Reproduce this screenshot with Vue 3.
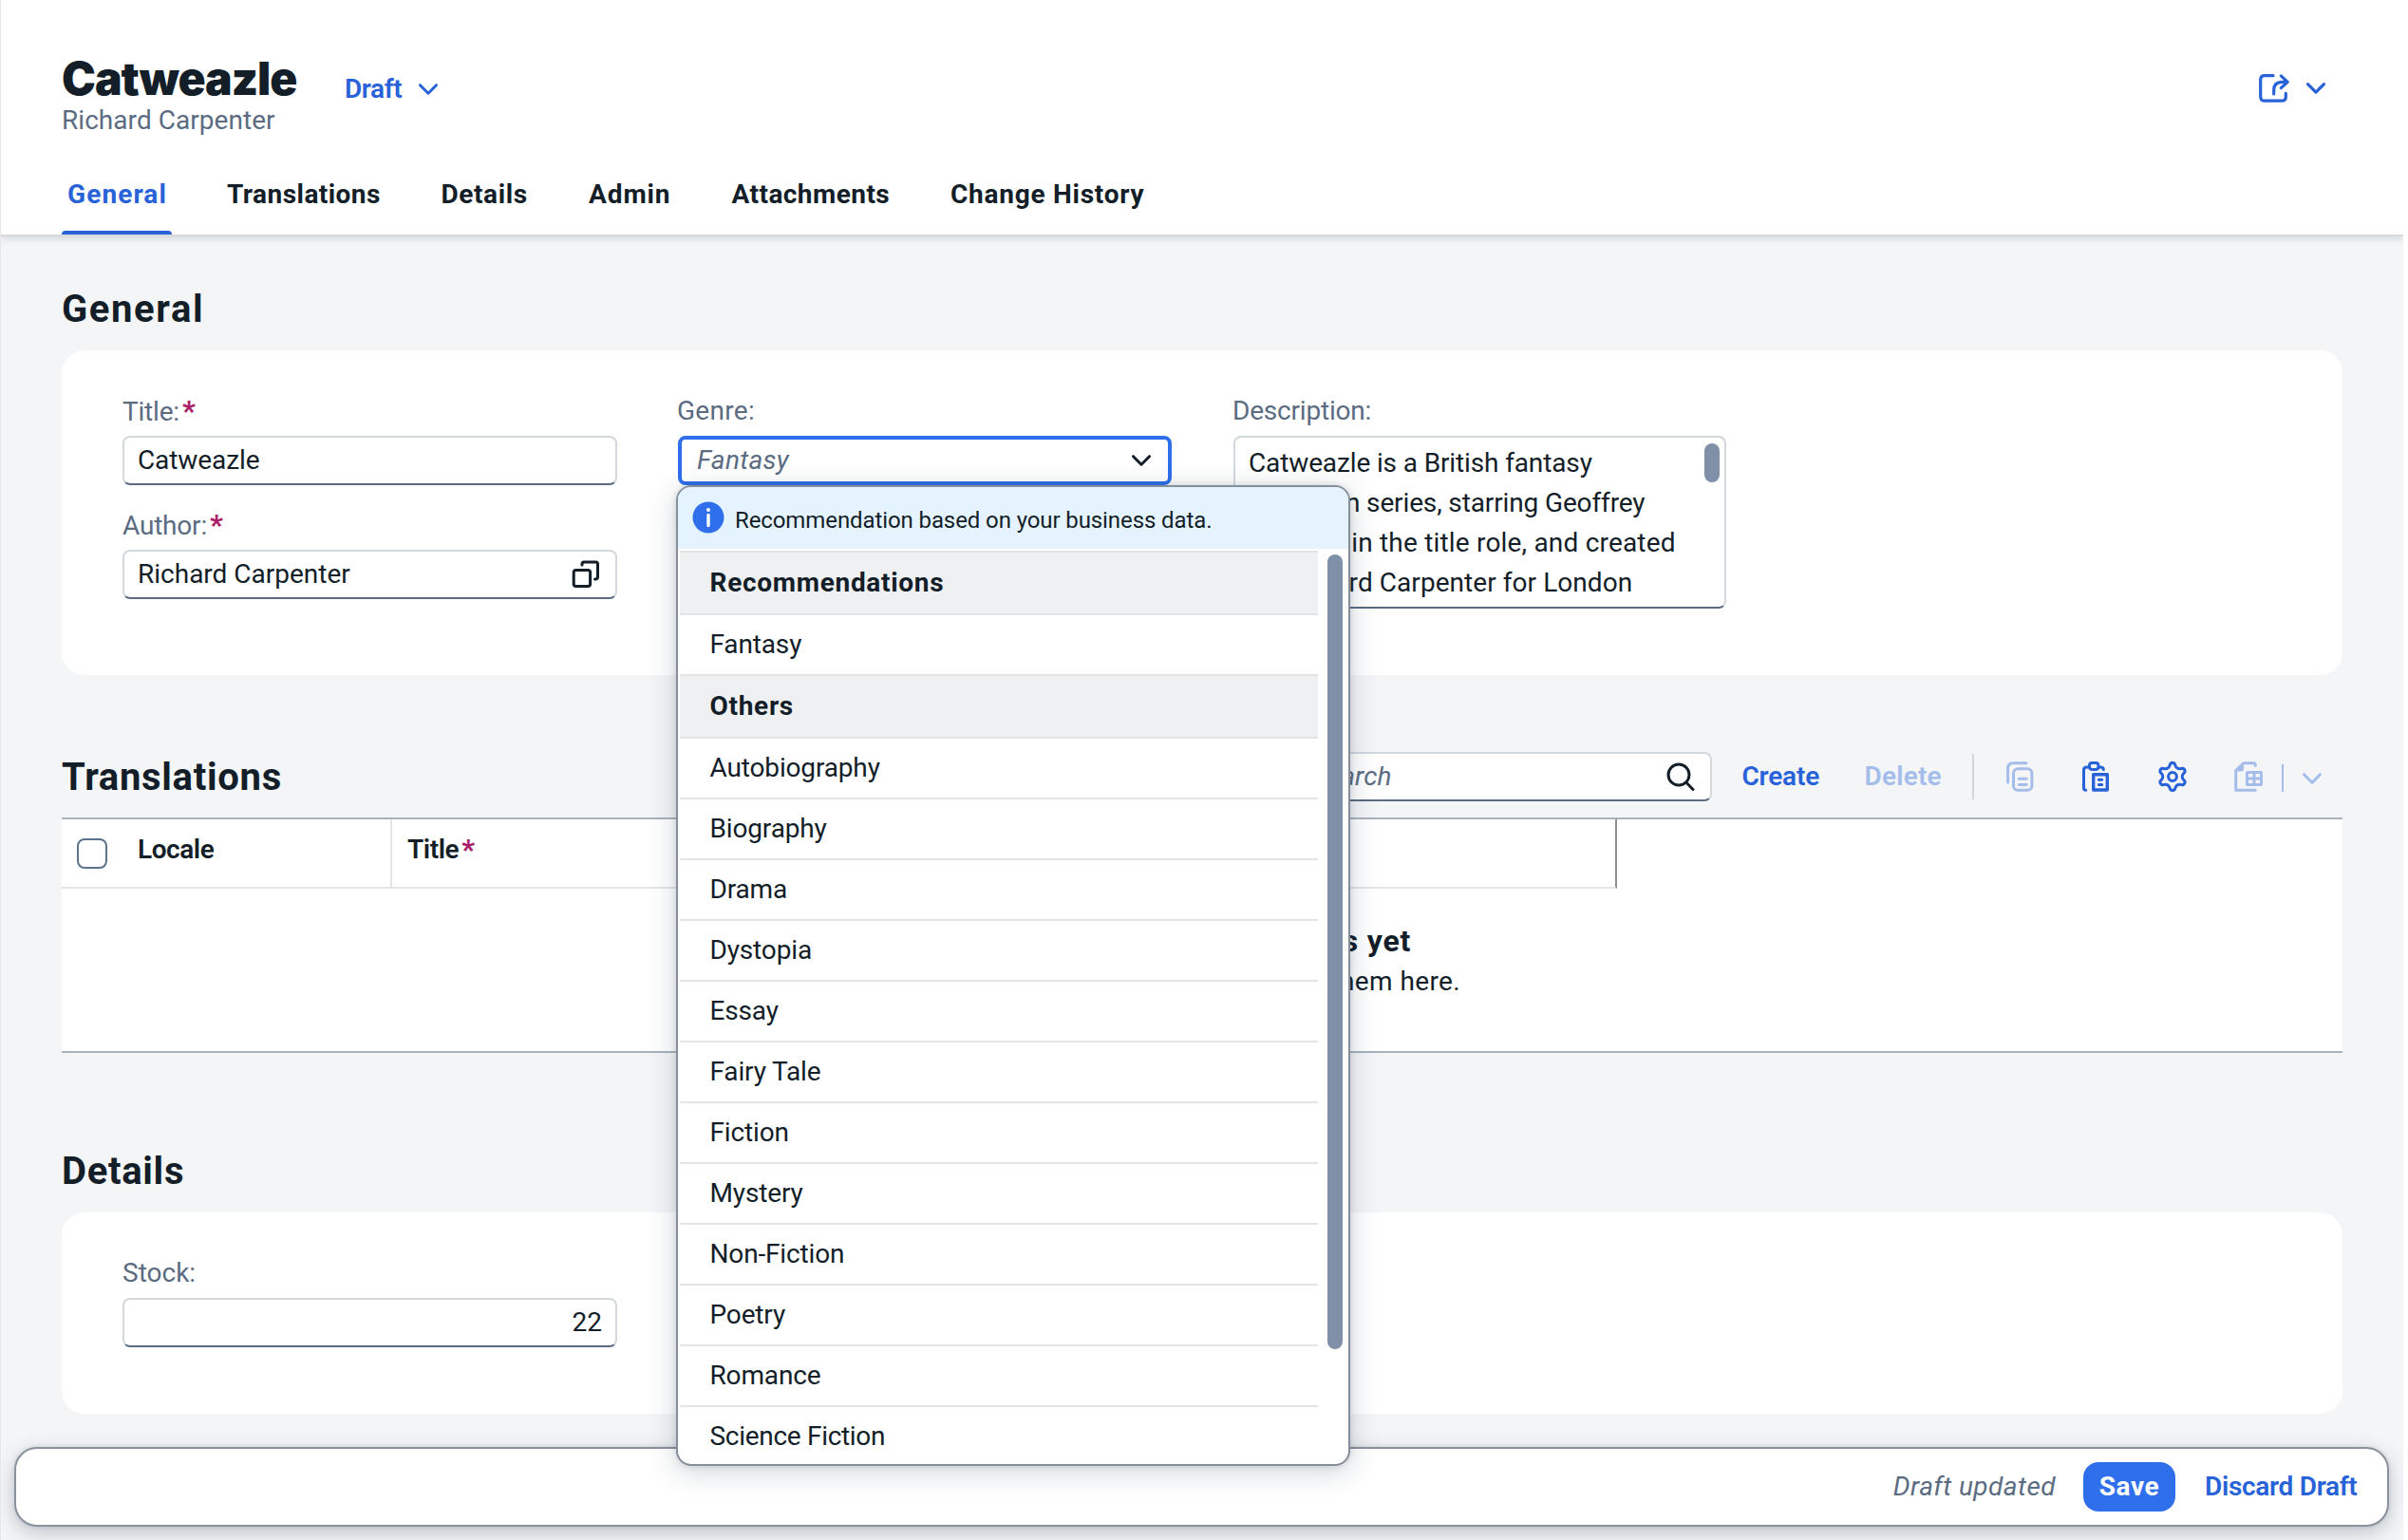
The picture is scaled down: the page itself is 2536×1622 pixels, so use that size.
<script setup>
const tabs = ['General', 'Translations', 'Details', 'Admin', 'Attachments', 'Change History']

const genres = [
  { name: 'Recommendations', group: true },
  { name: 'Fantasy' },
  { name: 'Others', group: true },
  { name: 'Autobiography' },
  { name: 'Biography' },
  { name: 'Drama' },
  { name: 'Dystopia' },
  { name: 'Essay' },
  { name: 'Fairy Tale' },
  { name: 'Fiction' },
  { name: 'Mystery' },
  { name: 'Non-Fiction' },
  { name: 'Poetry' },
  { name: 'Romance' },
  { name: 'Science Fiction' },
]

const description = [
  'Catweazle is a British fantasy',
  'television series, starring Geoffrey',
  'Bayldon in the title role, and created',
  'by Richard Carpenter for London',
]

// Outline of the settings gear: six rounded teeth around (16, 16)
const at = (deg, r) => {
  const a = (deg * Math.PI) / 180
  return `${(16 + r * Math.cos(a)).toFixed(2)} ${(16 + r * Math.sin(a)).toFixed(2)}`
}
let gear = ''
for (let k = 0; k < 6; k++) {
  const a = -90 + k * 60
  gear += `${k ? 'L' : 'M'}${at(a - 17, 11.4)}L${at(a - 9, 14)}Q${at(a, 15.4)} ${at(a + 9, 14)}L${at(a + 17, 11.4)}Q${at(a + 30, 9.4)} ${at(a + 43, 11.4)}`
}
gear += 'Z'
</script>

<template>
  <div class="page">
    <header class="header">
      <div class="title-row">
        <div class="titles">
          <h1>Catweazle</h1>
          <p>Richard Carpenter</p>
        </div>
        <div class="draft">
          <span>Draft</span>
          <svg width="24" height="16" viewBox="0 0 24 16"><path d="M3.5 3.7 12 12.2 20.5 3.7" /></svg>
        </div>
        <div class="share">
          <svg width="34" height="34" viewBox="0 0 34 34">
            <path d="M16 3.7H7Q2.7 3.7 2.7 8V25.7Q2.7 30.2 7 30.2H25Q29.3 30.2 29.3 26V22.3" />
            <path d="M16.7 23V19C16.7 13 20 10.3 25.5 10.3H31M24.3 3.9 31.2 10.3 24.3 16.7" />
          </svg>
          <svg width="24" height="16" viewBox="0 0 24 16"><path d="M3.5 3.7 12 12.2 20.5 3.7" /></svg>
        </div>
      </div>
      <nav class="tabs">
        <div v-for="(t, i) in tabs" :key="t" class="tab"><span :class="{ active: i === 0 }">{{ t }}</span></div>
      </nav>
    </header>

    <main>
      <h2 class="h-general">General</h2>
      <section class="card form general">
        <div class="col">
          <div class="label">Title:<b>*</b></div>
          <div class="input"><span class="tight">Catweazle</span></div>
          <div class="label second">Author:<b>*</b></div>
          <div class="input">
            <span>Richard Carpenter</span>
            <svg class="dark" width="32" height="32" viewBox="0 0 32 32">
              <rect x="3.2" y="11.6" width="17.4" height="17" rx="2.5" />
              <path d="M12 6V5Q12 3 14 3H26.5Q28.5 3 28.5 5V18.5Q28.5 21 26 21H25.5" />
            </svg>
          </div>
        </div>
        <div class="col genre">
          <div class="label genre-label">Genre:</div>
          <div class="input focus">
            <i>Fantasy</i>
            <svg class="dark" width="24" height="16" viewBox="0 0 24 16"><path d="M3.5 3.7 12 12.2 20.5 3.7" /></svg>
          </div>
          <div class="popup">
            <div class="info">
              <svg width="34" height="34" viewBox="0 0 34 34">
                <circle cx="17" cy="17" r="16.5" fill="#2f6fec" stroke="none" />
                <circle cx="17" cy="9" r="2" fill="#fff" stroke="none" />
                <path d="M17 14.5V25.5" stroke="#fff" stroke-width="3.4" />
              </svg>
              <span>Recommendation based on your business data.</span>
            </div>
            <div class="scroll">
              <ul>
                <li v-for="g in genres" :key="g.name" :class="{ group: g.group }">{{ g.name }}</li>
              </ul>
              <div class="bar"></div>
            </div>
          </div>
        </div>
        <div class="col">
          <div class="label desc">Description:</div>
          <div class="area">
            <div class="lines"><div v-for="l in description" :key="l">{{ l }}</div></div>
            <div class="thumb"></div>
          </div>
        </div>
      </section>

      <div class="toolbar">
        <h2>Translations</h2>
        <div class="search">
          <i>Search</i>
          <svg class="dark" width="32" height="32" viewBox="0 0 32 32"><circle cx="14" cy="14" r="11" /><path d="M22 22.3 29 29.5" /></svg>
        </div>
        <span class="btn create">Create</span>
        <span class="btn off delete">Delete</span>
        <div class="sep"></div>
        <svg class="off i1" width="32" height="32" viewBox="0 0 32 32">
          <path d="M3.6 22V7Q3.6 1.7 9 1.7H23" />
          <rect x="9.5" y="7.8" width="19.4" height="22.4" rx="4.5" />
          <path d="M15.3 18.3H23.3M15.3 24.5H23.3" />
        </svg>
        <svg class="i2" width="32" height="32" viewBox="0 0 32 32">
          <path d="M5.7 30.3Q3.5 30.3 3.5 28V9Q3.5 6 6.5 6H9M19.5 6H21Q24.3 6 24.3 8.5" />
          <rect x="9.5" y="1.6" width="9.4" height="6.8" rx="2.6" />
          <rect x="13.7" y="13.7" width="14.6" height="16.3" stroke-width="3.4" />
          <path d="M19.3 19.3H22.7M19.3 24.6H22.7" />
        </svg>
        <svg class="i3" width="32" height="32" viewBox="0 0 32 32"><path :d="gear" /><circle cx="16" cy="16" r="4.4" /></svg>
        <svg class="off i4" width="32" height="32" viewBox="0 0 32 32">
          <path d="M23.3 30.3H2.7V9.5L10.7 1.7H21Q23.3 1.7 23.3 4.5" />
          <path d="M3 10.5 11 2.5V7.500Q11 10.5 8 10.5Z" fill="currentColor" stroke="none" />
          <rect x="14.5" y="11.5" width="15" height="13" rx=".5" />
          <path d="M22 11.5V24.5M14.5 18H29.5" />
        </svg>
        <div class="bar-sm"></div>
        <svg class="off i5" width="24" height="16" viewBox="0 0 24 16"><path d="M3.5 3.7 12 12.2 20.5 3.7" /></svg>
      </div>

      <section class="table">
        <div class="thead">
          <div class="th locale"><span class="check"></span><span>Locale</span></div>
          <div class="th title"><span>Title</span><b>*</b></div>
        </div>
        <div class="empty">
          <div class="empty-title">There are no translations yet</div>
          <div class="empty-text">As soon as there are, you’ll see them here.</div>
        </div>
      </section>

      <h2 class="h-details">Details</h2>
      <section class="card form details">
        <div class="col">
          <div class="label stock">Stock:</div>
          <div class="input num"><span>22</span></div>
        </div>
      </section>
    </main>

    <footer class="footer">
      <i>Draft updated</i>
      <span class="save">Save</span>
      <span class="discard">Discard Draft</span>
    </footer>
  </div>
</template>

<style>
body { background: #fff; }
</style>

<style scoped>
* { box-sizing: border-box; }
.page {
  width: 2531px;
  height: 1622px;
  overflow: hidden;
  border-left: 1px solid #e6e7e9;
  background: #f4f5f7;
  font-family: Roboto, "Liberation Sans", sans-serif;
  font-size: 28px;
  line-height: 32px;
  color: #131e29;
}
h1, h2, p, ul { margin: 0; padding: 0; }
svg {
  display: block;
  flex: none;
  overflow: visible;
  fill: none;
  stroke: currentColor;
  stroke-width: 3;
  stroke-linecap: round;
  stroke-linejoin: round;
  color: #2862d8;
}
svg.dark { color: #131e29; }
svg.off { color: #a5bdea; }

.header {
  position: relative;
  height: 247px;
  padding: 55px 0 0 64px;
  background: #fff;
  box-shadow: 0 2px 0 #d8d9da, 0 4px 8px rgba(34, 53, 72, .16);
}
.title-row { display: flex; align-items: flex-start; height: 109px; }
.titles { width: 298px; }
h1 {
  font: 900 48px/56px Inter, sans-serif;
  letter-spacing: -1px;
  white-space: nowrap;
}
.titles p { color: #5b6c82; letter-spacing: .05px; }
.draft {
  display: flex;
  align-items: center;
  gap: 16px;
  margin-top: 23px;
  color: #2862d8;
  font-weight: 600;
  letter-spacing: -.4px;
}
.share { display: flex; align-items: center; gap: 15px; margin: 21px 80px 0 auto; }
.share svg { stroke-width: 3.2; }
.tabs {
  display: grid;
  grid-template-columns: 168px 225.5px 155.5px 150.5px 230.5px auto;
  height: 83px;
  font-weight: 700;
}
.tab span { display: inline-block; height: 83px; padding: 25px 0 0 6px; white-space: nowrap; letter-spacing: .45px; }
.tab:nth-child(1) span { letter-spacing: 1.1px; }
.tab:nth-child(3) span { letter-spacing: .6px; }
.tab:nth-child(4) span { letter-spacing: .9px; }
.tab:nth-child(6) span { letter-spacing: .75px; }
.tab .active {
  position: relative;
  width: 116px;
  color: #2862d8;
}
.tab .active::after {
  content: "";
  position: absolute;
  left: 0;
  right: 0;
  bottom: 0;
  height: 4px;
  border-radius: 4px 4px 0 0;
  background: #2862d8;
}

main { padding: 0 64px; }
h2 { font-size: 40px; line-height: 50px; font-weight: 700; letter-spacing: .7px; white-space: nowrap; }
.h-general { margin-top: 54px; letter-spacing: 1.6px; }
.h-details { margin-top: 100px; }
.card { margin-top: 18px; border-radius: 24px; background: #fff; }
.form { display: grid; grid-template-columns: 521px 521px 519px; column-gap: 64px; padding: 47px 64px 0; }
.general { height: 342px; }
.details { height: 212px; }
.label { height: 32px; line-height: 33px; color: #5b6c82; letter-spacing: -.2px; }
.label b, .th b { margin-left: 3px; color: #aa1f6a; font-weight: 800; font-size: 30px; }
.label.second { margin-top: 25px; }
.label.desc { margin-left: -1px; letter-spacing: -.2px; }
.label.genre-label { margin-left: -1px; letter-spacing: .3px; }
.label.stock { letter-spacing: 0; }
.input, .search {
  display: flex;
  align-items: center;
  justify-content: space-between;
  height: 52px;
  margin-top: 11px;
  padding: 0 14px;
  border: 2px solid #d3d8dd;
  border-bottom-color: #5b6c82;
  border-radius: 8px;
  background: #fff;
}
.input i, .search i { color: #5b6c82; }
.tight { letter-spacing: -.1px; }
.input > svg { margin-right: 1px; }
.input.focus { width: 520px; border: 4px solid #2f6fec; padding: 0 15px 0 16px; }
.input.focus i { letter-spacing: .3px; }
.input.num { justify-content: flex-end; }
.genre { position: relative; }
.area {
  display: flex;
  justify-content: space-between;
  height: 182px;
  margin-top: 11px;
  padding: 6px 5px 0 14px;
  border: 2px solid #d3d8dd;
  border-bottom-color: #5b6c82;
  border-radius: 8px;
  line-height: 42px;
  white-space: nowrap;
}
.lines div { letter-spacing: .06px; }
.lines div:nth-child(-n+2) { letter-spacing: -.13px; }
.lines div:nth-child(3) { letter-spacing: .19px; }
.thumb { width: 16px; height: 41px; border-radius: 8px; background: #7f90a8; }

.popup {
  position: absolute;
  z-index: 5;
  left: -2px;
  top: 95px;
  width: 710px;
  height: 1033px;
  overflow: hidden;
  border: 2px solid #858e9b;
  border-radius: 16px;
  background: #fff;
  box-shadow: 0 0 6px rgba(34, 53, 72, .14), 0 6px 30px rgba(34, 53, 72, .22);
}
.info {
  display: flex;
  align-items: flex-start;
  gap: 11px;
  height: 65px;
  padding: 15px 0 0 15px;
  background: #e5f3ff;
  font-size: 24px;
  letter-spacing: -.1px;
}
.info span { margin-top: 4px; white-space: nowrap; }
.scroll { display: flex; padding-top: 2px; }
ul { width: 672px; margin-left: 2px; list-style: none; border-top: 2px solid #e3e4e5; }
li {
  height: 64px;
  padding-left: 31.5px;
  border-bottom: 2px solid #e3e4e5;
  line-height: 61px;
  letter-spacing: -.15px;
}
li.group { height: 66px; line-height: 63px; background: #eff0f2; font-weight: 700; letter-spacing: .7px; }
li:last-child { border-bottom: 0; letter-spacing: -.3px; }
.bar { width: 16px; height: 837px; margin: 4px 0 0 10px; border-radius: 8px; background: #7f90a8; }

.toolbar { display: flex; align-items: center; height: 52px; margin-top: 81px; }
.toolbar h2 { margin-top: 2px; }
.search { width: 440px; margin: 0 0 0 auto; padding: 0 15px 0 17px; }
.search i { letter-spacing: .1px; }
.btn { color: #2862d8; font-weight: 600; }
.btn.off { color: #a5bdea; }
.create { width: 82px; margin-left: 32px; letter-spacing: -.2px; }
.delete { width: 82px; margin-left: 47px; letter-spacing: .2px; }
.sep { width: 2px; height: 48px; margin-left: 31.5px; background: #d3d6d9; }
.i1 { margin-left: 32px; }
.i2 { margin-left: 48px; }
.i3 { margin-left: 49px; }
.i4 { margin-left: 48px; }
.bar-sm { width: 2px; height: 29px; margin: 3px 0 0 19px; background: #a5bdea; }
.i5 { margin: 3px 20px 0 18px; }

.table {
  height: 248px;
  margin-top: 17px;
  border-top: 2px solid #a8b3bd;
  border-bottom: 2px solid #a8b3bd;
  background: #fff;
}
.thead { display: flex; width: 1638px; height: 73px; border-bottom: 2px solid #e5e5e5; border-right: 2px solid #8d8f91; font-weight: 600; }
.th { display: flex; padding-top: 16px; }
.locale { width: 348px; border-right: 2px solid #e5e5e5; letter-spacing: -.45px; }
.th.title { padding-left: 16px; letter-spacing: -.4px; }
.check { width: 32px; height: 32px; margin: 4px 32px 0 16px; border: 2px solid #5b738b; border-radius: 8px; }
.empty { padding-left: 5px; text-align: center; white-space: nowrap; }
.empty-title { margin-top: 35px; font-size: 32px; line-height: 40px; font-weight: 700; letter-spacing: .8px; }
.empty-text { margin-top: 7px; line-height: 32px; letter-spacing: .4px; }

.footer {
  display: flex;
  align-items: center;
  position: relative;
  width: 2501px;
  height: 84px;
  margin: 35px 0 0 14px;
  padding-right: 32px;
  border: 2px solid #8a929d;
  border-radius: 24px;
  background: #fff;
  box-shadow: 0 0 4px rgba(34, 53, 72, .12), 0 6px 20px rgba(34, 53, 72, .26);
}
.footer i { margin-left: auto; color: #5b6c82; letter-spacing: .45px; }
.save {
  width: 97px;
  height: 52px;
  margin-left: 29px;
  border-radius: 16px;
  background: #2f6fec;
  color: #fff;
  font-weight: 700;
  line-height: 51px;
  text-align: center;
  letter-spacing: .6px;
}
.discard { width: 160px; margin-left: 31px; color: #2862d8; font-weight: 600; letter-spacing: -.3px; white-space: nowrap; }
</style>
